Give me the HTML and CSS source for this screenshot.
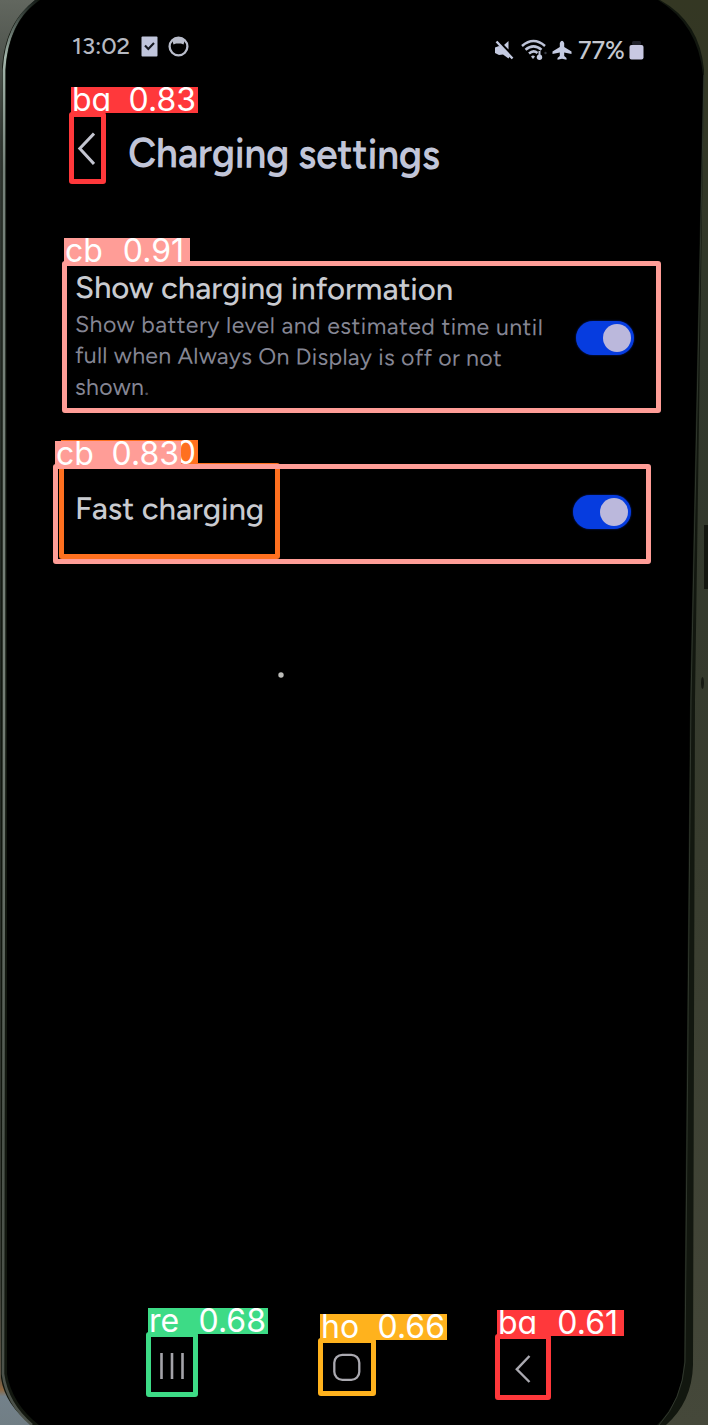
FILE: index.html
```html
<!DOCTYPE html>
<html lang="en">
<head>
<meta charset="utf-8">
<title>Charging settings</title>
<link rel="stylesheet" href="styles.css">
</head>
<body>
<div class="stage">
  <svg class="phone" viewBox="0 0 708 1425" aria-hidden="true">
    <defs>
      <linearGradient id="leftBg" x1="0" y1="0" x2="0" y2="1"><stop offset="0" stop-color="#62675f"/><stop offset=".1" stop-color="#343a35"/><stop offset=".5" stop-color="#202721"/><stop offset=".9" stop-color="#3c4038"/><stop offset=".965" stop-color="#5d5344"/><stop offset=".975" stop-color="#8d6841"/><stop offset=".98" stop-color="#73818a"/><stop offset="1" stop-color="#717e85"/></linearGradient>
      <linearGradient id="rightBg" x1="0" y1="0" x2="0" y2="1"><stop offset="0" stop-color="#343723"/><stop offset=".25" stop-color="#30372b"/><stop offset=".6" stop-color="#393d2f"/><stop offset="1" stop-color="#45483a"/></linearGradient>
      <linearGradient id="rim" gradientUnits="userSpaceOnUse" x1="0" y1="0" x2="0" y2="1425"><stop offset="0" stop-color="#151c18"/><stop offset=".04" stop-color="#a3b5ab"/><stop offset=".12" stop-color="#75817a"/><stop offset=".5" stop-color="#747e75"/><stop offset=".8" stop-color="#4c544b"/><stop offset="1" stop-color="#4b5149"/></linearGradient>
    </defs>
    <rect width="354" height="1425" fill="url(#leftBg)"/>
    <rect x="354" width="354" height="1425" fill="url(#rightBg)"/>
    <path d="M36 0C16 14 4 36 2 70L1 720L1 1378Q5 1405 32 1425H666Q692 1402 693 1365L695 700L704 70Q700 22 660 0Z" fill="#12170f"/>
    <path d="M37 0C18 14 6 36 4 70V720L3 1374Q7 1404 32 1425" fill="none" stroke="url(#rim)" stroke-width="2.6"/>
    <path d="M40 0C20 14 8 36 6 70L7 720L7 1374Q12 1404 39 1425H657Q682 1400 684 1362L690 700L703 75Q698 24 658 0Z" fill="#000"/>
    <path d="M704 75L691 700L685 1362Q682 1400 659 1425" fill="none" stroke="#30372d" stroke-width="1"/>
    <path d="M704 525h4v64h-4z" fill="#141710"/>
    <ellipse cx="702.5" cy="683" rx="1.5" ry="6" fill="#171a13"/>
    <circle cx="281" cy="675" r="2.7" fill="#bcbcb9"/>
  </svg>

  <main class="screen">
    <header class="status">
      <div class="status-left">
        <span class="clock">13:02</span>
        <svg class="i-check" viewBox="0 0 17 21"><rect x=".5" y=".5" width="16" height="20" rx="1" fill="#c0c5dc"/><path d="M4 9.5l3.3 3.5L13 7" fill="none" stroke="#151820" stroke-width="2.1"/></svg>
        <svg class="i-ring" viewBox="0 0 21 21"><circle cx="10.5" cy="10.5" r="8.9" fill="none" stroke="#b9bdcb" stroke-width="2.300"/><path d="M4 3.500L5.500 8.500 8 7.500h5l2.500 1L17 3.500Q10.500-1 4 3.500Z" fill="#b9bdcb"/></svg>
      </div>
      <div class="status-right">
        <svg class="i-mute" viewBox="0 0 19 20"><path d="M0 7.500l4-1.500 3 1 8 9-1.500 2.500-5.500-4-4 .5L0 13ZM9 5l4.500-4v8.500Z" fill="#c4cae0"/><path d="M3.500 .5L18.500 16.500" stroke="#000" stroke-width="1.500"/><path d="M1.500 1.500L17.500 18.500" stroke="#c4cae0" stroke-width="2.400"/></svg>
        <svg class="i-wifi" viewBox="0 0 26 22"><g fill="none" stroke="#bdc3d8" stroke-width="2.500"><path d="M1 7Q12.500-3 24 7M4.500 10.800Q12.500 4 20.500 10.800M8 14.500Q12.500 10.500 16.500 14"/></g><path d="M10 17.500Q12 15.500 14 17.500L12 20Z" fill="#bdc3d8"/><path d="M18.500 12v6" stroke="#bdc3d8" stroke-width="2"/><circle cx="18.500" cy="18.300" r="2.700" fill="#c4cae0"/><circle cx="24.500" cy="14" r="1.200" fill="#363943"/></svg>
        <svg class="i-plane" viewBox="0 0 20 20"><path d="M7.800 3Q10-1.500 12.200 3V7L19.500 11.500V14L12.200 12.500V16L14.500 18V19.800L10 18.800 5.500 19.800V18L7.800 16V12.500L.5 14V11.500L7.800 7Z" fill="#c5cbe2"/></svg>
        <span class="percent">77%</span>
        <svg class="i-batt" viewBox="0 0 15 20"><rect x="3" y="1" width="9" height="4" rx="1.500" fill="#20212a"/><rect x=".5" y="5" width="14" height="14.500" rx="2" fill="#c8c8e2"/></svg>
      </div>
    </header>

    <div class="titlebar">
      <svg class="i-back" viewBox="0 0 18 34"><path d="M17 1.500L2.800 16.500 17 32" fill="none" stroke="#c3c5d0" stroke-width="3"/></svg>
      <h1 class="title">Charging settings</h1>
    </div>

    <section class="row row-info">
      <div class="copy">
        <h2 class="name name-info">Show charging information</h2>
        <p class="desc"><span class="line l1">Show battery level and estimated time until</span><span class="line l2">full when Always On Display is off or not</span><span class="line l3">shown<span class="stop">.</span></span></p>
      </div>
      <div class="toggle"><span class="knob"></span></div>
    </section>

    <section class="row row-fast">
      <h2 class="name name-fast">Fast charging</h2>
      <div class="toggle"><span class="knob"></span></div>
    </section>

    <nav class="nav">
      <svg class="i-recents" viewBox="0 0 26 28"><path d="M2.500 1v26M13 1v26M23.500 1v26" stroke="#a4a3a9" stroke-width="2.600"/></svg>
      <svg class="i-home" viewBox="0 0 28 28"><rect x="1.300" y="1.800" width="25" height="25" rx="8" fill="none" stroke="#aaa9b0" stroke-width="2.300"/></svg>
      <svg class="i-navback" viewBox="0 0 16 28"><path d="M14.500 1L1.800 14.300 14.500 27" fill="none" stroke="#aaa9b0" stroke-width="2.400"/></svg>
    </nav>
  </main>

  <div class="box b-orange"></div><div class="tag t-orange">0</div>
  <div class="box b-back"></div><div class="tag t-back"><span>ba</span><span>0.83</span></div>
  <div class="box b-info"></div><div class="tag t-info"><span>cb</span><span>0.91</span></div>
  <div class="box b-fast"></div><div class="tag t-fast"><span>cb</span><span>0.83</span></div>
  <div class="box b-rec"></div><div class="tag t-rec"><span>re</span><span>0.68</span></div>
  <div class="box b-home"></div><div class="tag t-home"><span>ho</span><span>0.66</span></div>
  <div class="box b-nav"></div><div class="tag t-nav"><span>ba</span><span>0.61</span></div>
</div>
</body>
</html>
```
FILE: styles.css
```css
* { box-sizing: border-box; }
body { margin: 0; background: #000; }
.stage { position: relative; width: 708px; height: 1425px; overflow: hidden; font-family: Figtree, Roboto, "Liberation Sans", sans-serif; }
.phone { position: absolute; inset: 0; width: 708px; height: 1425px; }
.screen { position: relative; height: 1425px; display: flex; flex-direction: column; }
svg { display: block; flex: none; }
h1, h2, p { margin: 0; font-weight: 400; white-space: nowrap; }

.status { height: 72px; padding: 33px 64px 0 72px; display: flex; justify-content: space-between; }
.status-left, .status-right { display: flex; align-items: flex-start; }
.clock { font-size: 24px; line-height: 26px; font-weight: 500; width: 69px; color: #b6b9c2; letter-spacing: -.1px; }
.i-check { width: 17px; height: 21px; margin-top: 3px; }
.i-ring { width: 21px; height: 21px; margin: 3px 0 0 10px; }
.i-mute { width: 19px; height: 20px; margin-top: 7px; }
.i-wifi { width: 26px; height: 22px; margin: 6px 0 0 7px; }
.i-plane { width: 20px; height: 20px; margin: 7px 0 0 5px; }
.percent { font-size: 25px; line-height: 26px; font-weight: 500; width: 51px; margin: 4px 0 0 6px; color: #c4c7cf; }
.i-batt { width: 15px; height: 20px; margin-top: 7px; }

.titlebar { height: 193px; padding: 60px 0 0 77px; display: flex; align-items: flex-start; gap: 33px; }
.i-back { width: 18px; height: 34px; }
.title { font-size: 42px; line-height: 50px; font-weight: 600; margin-top: -4px; color: #c1c5d8; transform: rotate(.4deg) scaleX(.93); transform-origin: 0 50%; letter-spacing: -.3px; }

.row { display: flex; justify-content: space-between; padding-left: 75px; }
.row-info { height: 202px; padding-top: 5px; padding-right: 74px; }
.row-fast { height: 103px; padding-top: 24px; padding-right: 77px; }
.name { font-size: 31px; line-height: 38px; font-weight: 500; color: #c9cbd0; transform: rotate(.3deg); transform-origin: 0 50%; }
.name-info { margin-top: -1px; letter-spacing: -.02px; }
.name-fast { margin-top: -1px; }
.desc { font-size: 23px; line-height: 31px; color: #858694; margin-top: 2px; }
.line { display: block; width: max-content; transform: rotate(.4deg); transform-origin: 0 50%; }
.l1 { letter-spacing: .52px; }
.l2 { letter-spacing: .34px; }
.l3 { letter-spacing: .35px; transform: translateY(1px); }
.stop { color: #50515c; }
.toggle { width: 58px; height: 34px; border-radius: 17px; background: #063cdf; padding: 3px; display: flex; justify-content: flex-end; box-shadow: 0 0 2px #0527a0; }
.row-info .toggle { margin-top: 51px; }
.row-fast .toggle { margin-top: 4px; }
.knob { width: 28px; height: 28px; border-radius: 50%; background: #bbb8dc; }

.nav { margin-top: auto; height: 73px; padding-left: 159px; display: flex; align-items: flex-start; }
.i-recents { width: 26px; height: 28px; }
.i-home { width: 28px; height: 28px; margin: 1px 0 0 148px; }
.i-navback { width: 16px; height: 28px; margin: 3px 0 0 154px; }

/* Detection overlay */
.box { position: absolute; border: 5px solid; border-radius: 3px; }
.tag { position: absolute; height: 26px; padding: 0 2px 0 1px; display: flex; justify-content: space-between; color: #fff; font: 400 32px/26px Inter, sans-serif; font-feature-settings: "cv11"; white-space: nowrap; }
.b-back { left: 69px; top: 112px; width: 37px; height: 72px; border-color: #ff383b; }
.t-back { left: 71px; top: 87px; width: 127px; background: #ff383b; }
.b-info { left: 62px; top: 261px; width: 599px; height: 152px; border-color: #ff9d97; }
.t-info { left: 64px; top: 238px; width: 126px; padding-right: 6px; background: #ff9d97; }
.b-fast { left: 53px; top: 464px; width: 598px; height: 100px; border-color: #ff9d97; }
.t-fast { left: 55px; top: 441px; width: 126px; background: #ff9d97; }
.b-orange { left: 59px; top: 463px; width: 221px; height: 96px; border-color: #ff701f; }
.t-orange { left: 61px; top: 440px; width: 137px; background: #ff701f; justify-content: flex-end; }
.b-rec { left: 146px; top: 1332px; width: 52px; height: 65px; border-color: #3ddb86; }
.t-rec { left: 148px; top: 1308px; width: 120px; background: #3ddb86; }
.b-home { left: 318px; top: 1338px; width: 58px; height: 58px; border-color: #ffb21d; }
.t-home { left: 320px; top: 1314px; width: 127px; background: #ffb21d; }
.b-nav { left: 495px; top: 1334px; width: 56px; height: 66px; border-color: #ff383b; }
.t-nav { left: 497px; top: 1310px; width: 127px; padding-right: 6px; background: #ff383b; }
```
